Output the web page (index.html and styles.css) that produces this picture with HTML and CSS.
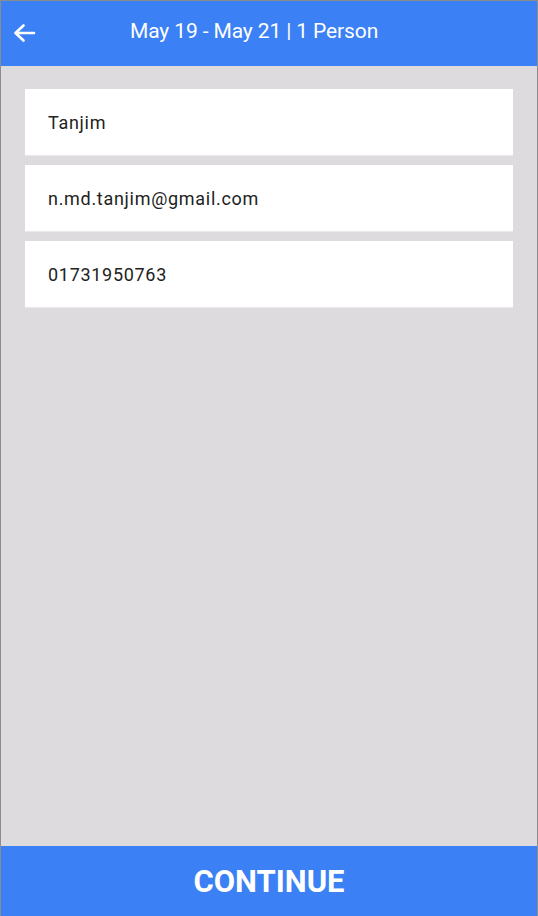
FILE: index.html
```html
<!DOCTYPE html>
<html>
<head>
<meta charset="utf-8">
<link rel="stylesheet" href="styles.css">
</head>
<body>
<div class="screen">
  <header class="topbar">
    <button class="back" aria-label="Back">
      <svg width="24" height="24" viewBox="0 0 24 24"><path d="M22 11H4.5M11.5 3.5 3.5 11l8 7.5" fill="none" stroke="#fff" stroke-width="2.6" stroke-linecap="round" stroke-linejoin="round"/></svg>
    </button>
    <h1 class="title">May 19 - May 21 | 1 Person</h1>
  </header>
  <main class="content">
    <div class="field">Tanjim</div>
    <div class="field">n.md.tanjim@gmail.com</div>
    <div class="field">01731950763</div>
  </main>
  <button class="continue">CONTINUE</button>
</div>
</body>
</html>
```

FILE: styles.css
```css
html, body {
  margin: 0;
  padding: 0;
}
body {
  font-family: Roboto, "Noto Sans", sans-serif;
  background: #dddbde;
}
.screen {
  box-sizing: border-box;
  width: 538px;
  height: 916px;
  border: 1px solid #8c8c8c;
  border-bottom: none;
  display: flex;
  flex-direction: column;
  background: #dddbde;
}
.topbar {
  height: 65px;
  background: #3b80f5;
  display: flex;
  align-items: flex-start;
  flex-shrink: 0;
}
.back {
  background: none;
  border: none;
  padding: 0;
  margin: 21px 0 0 11px;
  width: 24px;
  height: 24px;
  display: flex;
}
.title {
  margin: 16px 0 0 94px;
  color: #fff;
  font-size: 21px;
  font-weight: 400;
  line-height: 28px;
  letter-spacing: -0.12px;
}
.content {
  flex: 1;
  padding: 23px 24px 0 24px;
  display: flex;
  flex-direction: column;
  gap: 10px;
}
.field {
  height: 66px;
  background: #fff;
  box-shadow: 0 1px 0 #e9e8ea;
  display: flex;
  align-items: center;
  padding-left: 23px;
  font-size: 18px;
  color: #222;
  letter-spacing: 0.7px;
}
.continue {
  height: 70px;
  flex-shrink: 0;
  border: none;
  background: #3b80f5;
  color: #fff;
  font-family: Roboto, sans-serif;
  font-weight: 700;
  font-size: 31px;
  padding: 0;
}
```
